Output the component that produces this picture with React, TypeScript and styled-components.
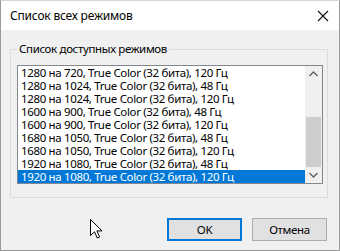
import React from 'react';
import styled, { createGlobalStyle } from 'styled-components';

const GlobalStyle = createGlobalStyle`
  html, body {
    margin: 0;
    padding: 0;
    background: #ffffff;
  }
  body {
    font-family: "Noto Sans", "Open Sans", sans-serif;
    font-size: 11.5px;
    letter-spacing: -0.35px;
    color: #000;
  }
`;

const S = {
  Window: styled.div`
    position: relative;
    width: 340px;
    height: 251px;
    box-sizing: border-box;
    border: 1px solid #9a9a9a;
    border-top-color: #d8d8d8;
    background: #f0f0f0;
    display: flex;
    flex-direction: column;
    overflow: hidden;
  `,

  TitleBar: styled.div`
    height: 29px;
    background: #ffffff;
    display: flex;
    align-items: center;
    justify-content: space-between;
    padding: 0 9px 0 9px;
    flex-shrink: 0;
  `,

  Title: styled.span`
    font-size: 12px;
    letter-spacing: -0.2px;
    line-height: 16px;
    margin-top: 1px;
  `,

  Close: styled.div`
    width: 14px;
    height: 14px;
    display: flex;
    align-items: center;
    justify-content: center;
    margin-top: 1px;
  `,

  Body: styled.div`
    flex: 1;
    display: flex;
    flex-direction: column;
    padding: 11px 11px 0 9px;
  `,

  Group: styled.fieldset`
    margin: 0;
    border: 1px solid #dcdcdc;
    padding: 0 4px 13px 6px;
    min-width: 0;
  `,

  Legend: styled.legend`
    padding: 0 2px;
    margin-left: 0;
    line-height: 16px;
  `,

  List: styled.div`
    margin-top: 8px;
    border: 1px solid #828790;
    background: #ffffff;
    display: flex;
    height: 117px;
  `,

  Rows: styled.div`
    flex: 1;
    display: flex;
    flex-direction: column;
    overflow: hidden;
  `,

  Row: styled.div<{ $selected?: boolean }>`
    height: 13px;
    line-height: 13px;
    padding-left: 3px;
    white-space: nowrap;
    background: ${(p) => (p.$selected ? '#0078d7' : 'transparent')};
    color: ${(p) => (p.$selected ? '#ffffff' : '#000000')};
  `,

  ScrollBar: styled.div`
    width: 17px;
    background: #f0f0f0;
    display: flex;
    flex-direction: column;
  `,

  Arrow: styled.div`
    height: 17px;
    display: flex;
    align-items: center;
    justify-content: center;
  `,

  Track: styled.div`
    flex: 1;
    display: flex;
    flex-direction: column;
    padding-top: 34px;
  `,

  Thumb: styled.div`
    height: 50px;
    margin: 0 1px;
    background: #cdcdcd;
  `,

  Buttons: styled.div`
    display: flex;
    justify-content: flex-end;
    gap: 10px;
    margin-top: 20px;
    padding-right: 1px;
  `,

  Button: styled.button<{ $default?: boolean }>`
    width: 75px;
    height: 23px;
    box-sizing: border-box;
    font-family: "Noto Sans", "Open Sans", sans-serif;
    font-size: 11.5px;
    letter-spacing: -0.35px;
    color: #000;
    background: #e1e1e1;
    border: ${(p) => (p.$default ? '2px solid #0078d7' : '1px solid #adadad')};
    padding: 0;
    margin: 0;
  `,

  Cursor: styled.svg`
    position: absolute;
    left: 89px;
    top: 218px;
  `,
};

const modes = [
  '1280 на 720, True Color (32 бита), 120 Гц',
  '1280 на 1024, True Color (32 бита), 48 Гц',
  '1280 на 1024, True Color (32 бита), 120 Гц',
  '1600 на 900, True Color (32 бита), 48 Гц',
  '1600 на 900, True Color (32 бита), 120 Гц',
  '1680 на 1050, True Color (32 бита), 48 Гц',
  '1680 на 1050, True Color (32 бита), 120 Гц',
  '1920 на 1080, True Color (32 бита), 48 Гц',
  '1920 на 1080, True Color (32 бита), 120 Гц',
];

const App: React.FC = () => {
  return (
    <>
      <GlobalStyle />
      <S.Window>
        <S.TitleBar>
          <S.Title>Список всех режимов</S.Title>
          <S.Close>
            <svg width="12" height="12" viewBox="0 0 12 12">
              <path d="M1 1 L11 11 M11 1 L1 11" stroke="#111" strokeWidth="1.1" fill="none" />
            </svg>
          </S.Close>
        </S.TitleBar>
        <S.Body>
          <S.Group>
            <S.Legend>Список доступных режимов</S.Legend>
            <S.List>
              <S.Rows>
                {modes.map((m, i) => (
                  <S.Row key={i} $selected={i === modes.length - 1}>
                    {m}
                  </S.Row>
                ))}
              </S.Rows>
              <S.ScrollBar>
                <S.Arrow>
                  <svg width="9" height="6" viewBox="0 0 9 6">
                    <path d="M0.5 5 L4.5 1 L8.5 5" stroke="#606060" strokeWidth="1.3" fill="none" />
                  </svg>
                </S.Arrow>
                <S.Track>
                  <S.Thumb />
                </S.Track>
                <S.Arrow>
                  <svg width="9" height="6" viewBox="0 0 9 6">
                    <path d="M0.5 1 L4.5 5 L8.5 1" stroke="#606060" strokeWidth="1.3" fill="none" />
                  </svg>
                </S.Arrow>
              </S.ScrollBar>
            </S.List>
          </S.Group>
          <S.Buttons>
            <S.Button $default>OK</S.Button>
            <S.Button>Отмена</S.Button>
          </S.Buttons>
        </S.Body>
        <S.Cursor width="13" height="20" viewBox="0 0 13 20">
          <path
            d="M0.5 0.5 L0.5 16.5 L4.5 12.8 L7.3 19 L9.6 18 L6.9 11.9 L12 11.9 Z"
            fill="#ffffff"
            stroke="#000000"
            strokeWidth="1"
            strokeLinejoin="miter"
          />
        </S.Cursor>
      </S.Window>
    </>
  );
};

export default App;
